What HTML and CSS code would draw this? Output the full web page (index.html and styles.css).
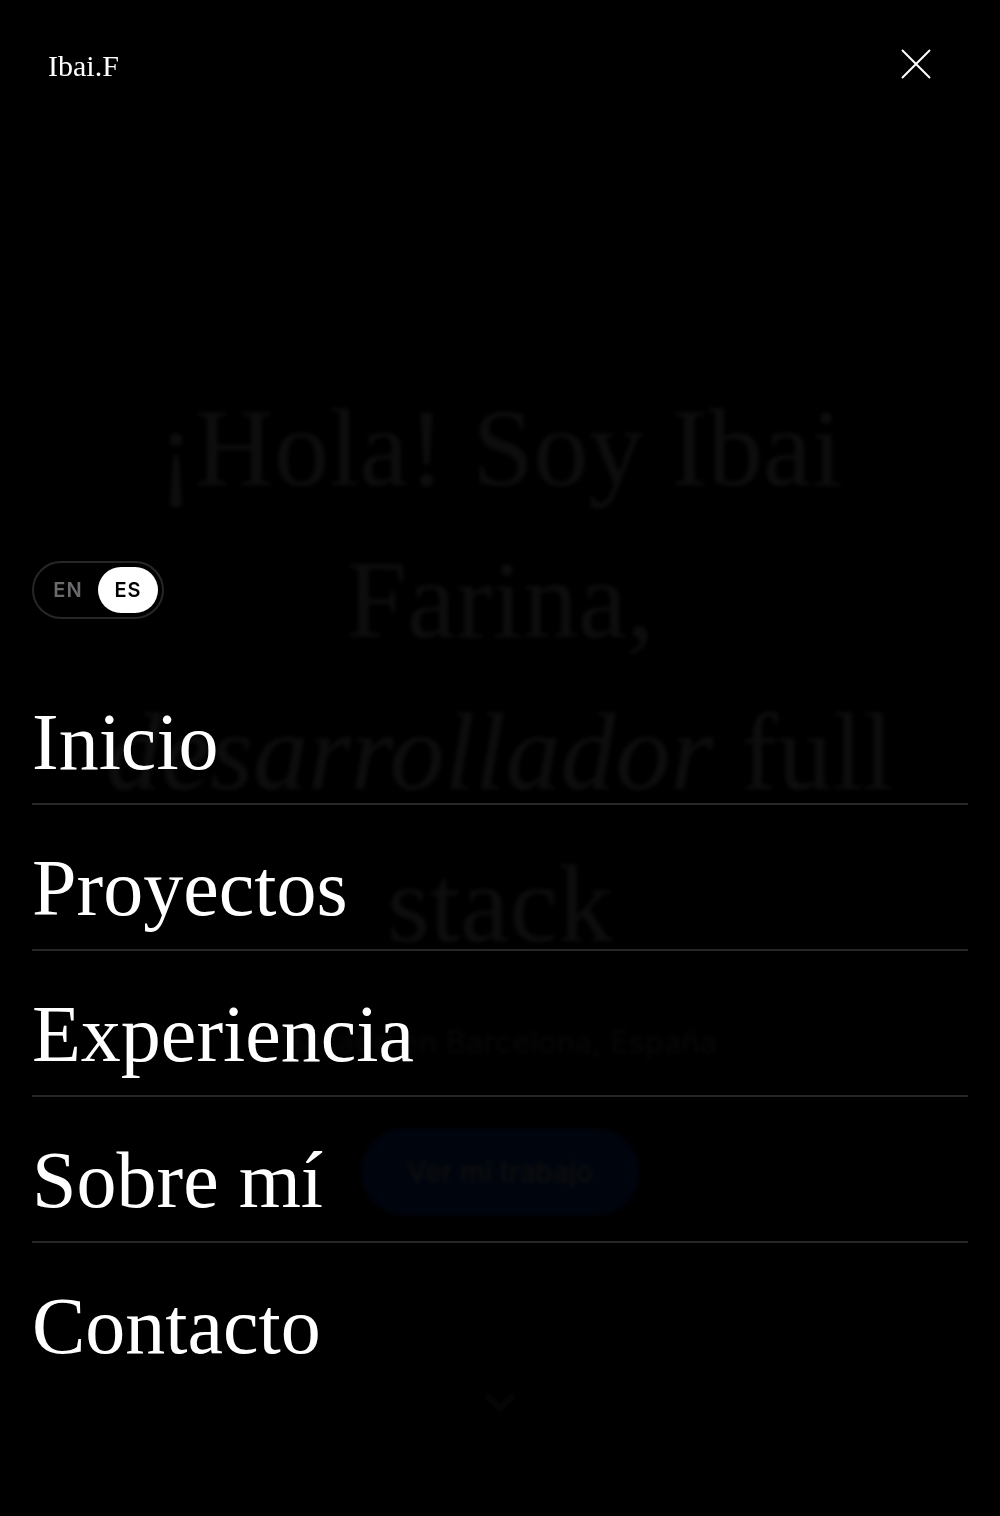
FILE: index.html
```html
<!DOCTYPE html>
<html lang="es">
<head>
<meta charset="utf-8">
<meta name="viewport" content="width=device-width, initial-scale=1">
<title>Ibai.F</title>
<link rel="stylesheet" href="styles.css">
</head>
<body>
<main class="hero">
  <h1 class="hero-title">¡Hola! Soy Ibai<br>Farina,<br><em>desarrollador</em> full<br>stack</h1>
  <p class="hero-place">Basado en Barcelona, España</p>
  <a class="hero-button" href="#proyectos">Ver mi trabajo</a>
  <svg class="hero-chevron" viewBox="0 0 32 20" aria-hidden="true"><path d="M2 3l14 14L30 3"/></svg>
</main>
<div class="menu">
  <header class="menu-header">
    <a class="logo" href="#inicio">Ibai.F</a>
    <button class="close" type="button" aria-label="Cerrar menú">
      <svg viewBox="0 0 32 32" aria-hidden="true"><path d="M2 2l28 28M30 2L2 30"/></svg>
    </button>
  </header>
  <div class="menu-body">
    <div class="language" role="group" aria-label="Idioma">
      <button class="language-option" type="button">EN</button>
      <button class="language-option is-active" type="button">ES</button>
    </div>
    <nav class="links">
      <a class="link" href="#inicio">Inicio</a>
      <a class="link" href="#proyectos">Proyectos</a>
      <a class="link" href="#experiencia">Experiencia</a>
      <a class="link" href="#sobre-mi">Sobre mí</a>
      <a class="link" href="#contacto">Contacto</a>
    </nav>
  </div>
</div>
</body>
</html>
```

FILE: styles.css
```css
* { box-sizing: border-box; }

body {
  margin: 0;
  background: #000;
  color: #fff;
  font-family: Inter, "Liberation Sans", sans-serif;
}

a { color: inherit; text-decoration: none; }

button {
  padding: 0;
  border: 0;
  background: none;
  color: inherit;
  font: inherit;
  cursor: pointer;
}

/* Page behind the menu */
.hero {
  position: relative;
  display: flex;
  flex-direction: column;
  align-items: center;
  justify-content: center;
  min-height: 100vh;
  padding-top: 72px;
  text-align: center;
}

.hero-title {
  margin: 0 0 38px;
  font: 400 110px/152px "Liberation Serif", serif;
}

.hero-place {
  margin: 0 0 62px;
  color: #999;
  font-size: 31px;
  line-height: 48px;
}

.hero-button {
  padding: 24px 46px;
  border-radius: 44px;
  background: #0050ff;
  font-size: 28px;
  font-weight: 500;
  line-height: 40px;
}

.hero-chevron {
  position: absolute;
  bottom: 104px;
  left: 50%;
  width: 32px;
  margin-left: -16px;
  fill: none;
  stroke: #aaa;
  stroke-width: 4;
}

/* Full-screen menu */
.menu {
  position: fixed;
  inset: 0;
  display: flex;
  flex-direction: column;
  justify-content: space-between;
  overflow-y: auto;
  background: rgba(0, 0, 0, 0.95);
  backdrop-filter: blur(2px);
}

.menu-header {
  display: flex;
  align-items: center;
  justify-content: space-between;
  height: 128px;
  padding: 0 68px 0 48px;
}

.logo {
  padding-top: 4px;
  font: 30px/40px "Liberation Serif", serif;
}

.close svg {
  display: block;
  width: 32px;
  height: 32px;
  fill: none;
  stroke: #fff;
  stroke-width: 2;
}

.menu-body { padding: 0 32px 129px; }

.language {
  display: inline-flex;
  margin-bottom: 40px;
  padding: 4px;
  border: 2px solid #262626;
  border-radius: 29px;
}

.language-option {
  min-width: 60px;
  height: 46px;
  border-radius: 23px;
  color: #6b6b6e;
  font-size: 20px;
  font-weight: 600;
  letter-spacing: 1px;
}

.language-option.is-active {
  background: #fff;
  color: #000;
}

.links {
  display: flex;
  flex-direction: column;
}

.link {
  padding: 31px 0 9px;
  border-bottom: 2px solid #262626;
  font: 80px/104px "Liberation Serif", serif;
}

.link:last-child { border-bottom: 0; }
```
